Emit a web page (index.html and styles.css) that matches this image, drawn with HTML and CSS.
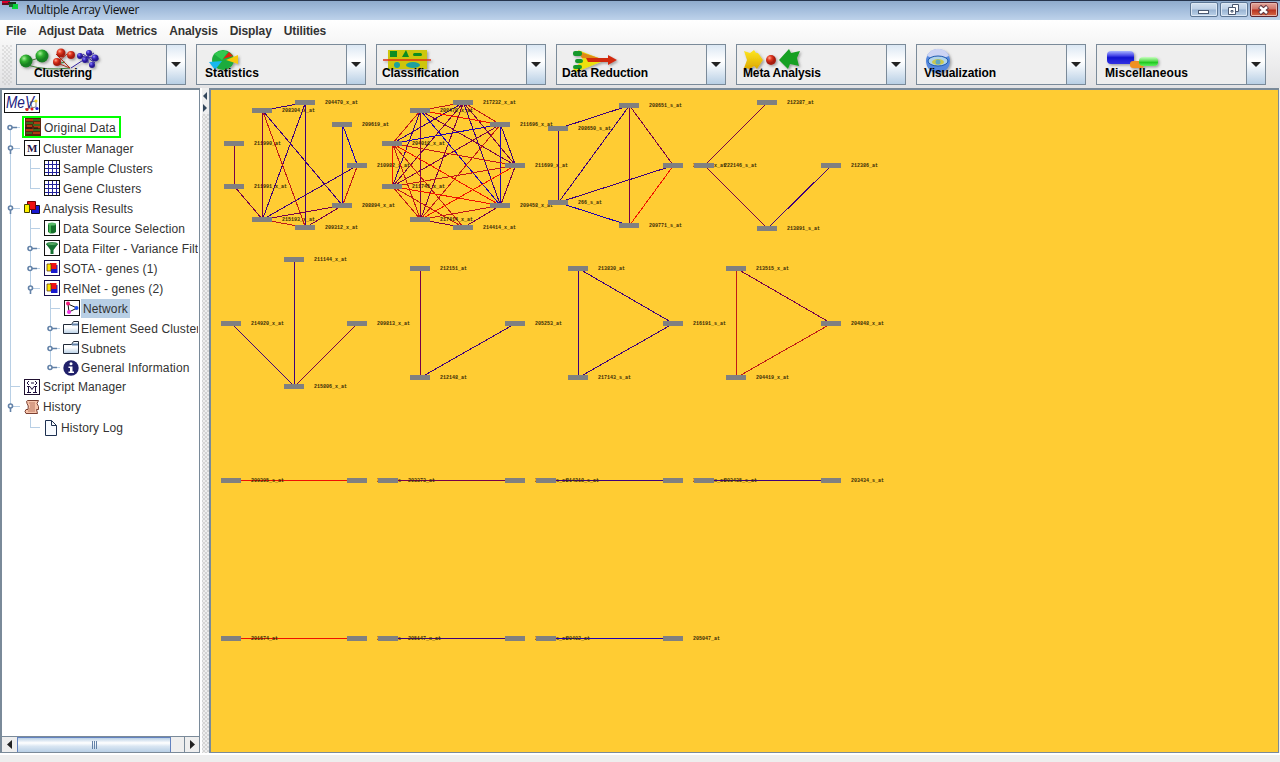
FILE: index.html
```html
<!DOCTYPE html>
<html lang="en">
<head>
<meta charset="utf-8">
<title>Multiple Array Viewer</title>
<link rel="stylesheet" href="styles.css">
</head>
<body>
<div class="window">
  <header class="titlebar">
    <svg class="appicon" width="20" height="20"><path d="M2 1h8v4H2z" fill="#d8002c"/><path d="M8 2h8v3H8z" fill="#17351c"/><path d="M2 3h7v2H2z" fill="#601020"/><path d="M12 4h6v5h-6z" fill="#08d33c"/><path d="M9 4h4v3H9z" fill="#166b2b"/></svg>
    <span class="title">Multiple Array Viewer</span>
    <div class="controls">
      <span class="ctl"><svg width="26" height="14"><rect x="7.500" y="7.500" width="10" height="3" fill="#fff" stroke="#4a5870"/></svg></span>
      <span class="ctl"><svg width="26" height="14"><path d="M11.500 1.500h6v7h-6z" fill="#fff" stroke="#4a5870"/><path d="M7.500 4.500h7v7h-7z" fill="#fff" stroke="#4a5870"/><path d="M10 7.500h2v1.500h-2z" fill="none" stroke="#4a5870"/></svg></span>
      <span class="ctl close"><svg width="26" height="14"><path d="M8.500 3.500l8 7M16.500 3.500l-8 7" stroke="#5b3440" stroke-width="4.500"/><path d="M9 4l7 6M16 4l-7 6" stroke="#fff" stroke-width="2.500"/></svg></span>
    </div>
  </header>
  <nav class="menubar"><span>File</span><span>Adjust Data</span><span>Metrics</span><span>Analysis</span><span>Display</span><span>Utilities</span></nav>
  <div class="toolbar">
    <div class="grip"></div>
    <div class="tool"><svg class="art" width="149" height="39">
      <defs>
        <radialGradient id="gg" cx=".35" cy=".3"><stop offset="0" stop-color="#a8f098"/><stop offset=".5" stop-color="#30b030"/><stop offset="1" stop-color="#188020"/></radialGradient>
        <radialGradient id="gr" cx=".35" cy=".3"><stop offset="0" stop-color="#ffa890"/><stop offset=".5" stop-color="#e03820"/><stop offset="1" stop-color="#a81c10"/></radialGradient>
        <radialGradient id="gb" cx=".35" cy=".3"><stop offset="0" stop-color="#9a90ff"/><stop offset=".5" stop-color="#4030c8"/><stop offset="1" stop-color="#281890"/></radialGradient>
        <linearGradient id="pb" x2="0" y2="1"><stop offset="0" stop-color="#a8b4ff"/><stop offset=".35" stop-color="#4848e8"/><stop offset=".5" stop-color="#1414d0"/><stop offset="1" stop-color="#3030e0"/></linearGradient>
        <linearGradient id="pg" x2="0" y2="1"><stop offset="0" stop-color="#c8ffc0"/><stop offset=".45" stop-color="#58dc50"/><stop offset=".6" stop-color="#20c820"/><stop offset="1" stop-color="#60f060"/></linearGradient>
        <linearGradient id="pa" x2="0" y2="1"><stop offset="0" stop-color="#ffe820"/><stop offset="1" stop-color="#dca800"/></linearGradient>
        <linearGradient id="bt" x2="0" y2="1"><stop offset="0" stop-color="#f4f8fc"/><stop offset=".5" stop-color="#fff"/><stop offset="1" stop-color="#b8cfe5"/></linearGradient>
        <filter id="sh" x="-20%" y="-20%" width="150%" height="160%"><feDropShadow dx="1.500" dy="1.500" stdDeviation="1" flood-color="#555" flood-opacity=".5"/></filter>
      </defs>
      <g filter="url(#sh)"><path d="M9 17L25 12M10 20q20 6 43 3L47 17 41 11M48 17l-8 2" fill="none" stroke="#3a7a30"/><path d="M39 9l14 14M50 9l-10 9M40 18l13 5" stroke="#b03018" fill="none"/><path d="M54 23l17-11M62 11l20 3M71 6v12M66 9l12 9M77 8l-10 6" stroke="#3424a0" fill="none"/>
      <circle cx="9" cy="16" r="6.500" fill="url(#gg)"/><circle cx="25" cy="11" r="6.500" fill="url(#gg)"/><g fill="url(#gr)"><circle cx="44" cy="8" r="4.500"/><circle cx="54" cy="10" r="4"/><circle cx="40" cy="17" r="4"/></g><g fill="url(#gb)"><circle cx="63" cy="11" r="3"/><circle cx="72" cy="8" r="3"/><circle cx="78" cy="13" r="3.500"/><circle cx="68" cy="15" r="3"/><circle cx="75" cy="20" r="3"/></g></g>
      <text x="17" y="32" textLength="58">Clustering</text></svg><span class="drop"></span></div>
    <div class="tool"><svg class="art" width="149" height="39">
      <g filter="url(#sh)"><ellipse cx="26" cy="15" rx="11" ry="10" fill="#1cac3c"/><path d="M17 9a11 9 0 0 1 14-2L25 15z" fill="#30c850"/><path d="M26 14L32 7 36 11z" fill="#e02010"/><path d="M29 15l12-5v9z" fill="#f8c808"/><path d="M12 17l13-1-7 9z" fill="#18b8f0"/></g>
      <text x="8" y="32" textLength="54">Statistics</text></svg><span class="drop"></span></div>
    <div class="tool"><svg class="art" width="149" height="39">
      <g filter="url(#sh)"><path d="M11 5h39v19H11z" fill="#cdc60c"/><path d="M13 6h7v6h-7z" fill="#0c8c20"/><path d="M25 12l4-7 3 7z" fill="#0c8c20"/><rect x="36" y="8" width="9" height="3" rx="1.500" fill="#0c8c20"/><circle cx="20" cy="20" r="3" fill="#1aa0a0"/><ellipse cx="36" cy="20" rx="7" ry="3" fill="#1aa0a0"/><path d="M6 15h48" stroke="#e03010" stroke-width="1.500"/></g>
      <text x="5" y="32" textLength="77">Classification</text></svg><span class="drop"></span></div>
    <div class="tool"><svg class="art" width="149" height="39">
      <g filter="url(#sh)"><path d="M21 5l23 9v3L19 27l-3-3 10-9z" fill="#ece008"/><path d="M20 6l25 8-20-1z" fill="#e08818"/><path d="M29 13h22v-3l9 5-9 5v-3H31z" fill="#d22c10"/><g fill="#16982c"><rect x="16" y="6" width="9" height="5" rx="2"/><rect x="18" y="14" width="8" height="4" rx="2"/><rect x="16" y="20" width="9" height="4" rx="2"/></g></g>
      <text x="5" y="32" textLength="86">Data Reduction</text></svg><span class="drop"></span></div>
    <div class="tool"><svg class="art" width="149" height="39">
      <g filter="url(#sh)"><path d="M7 6l6 2 4-3 2 3h2l5 7-6 9-3-3-4 3-6-1 3-8z" fill="url(#pa)"/><circle cx="34" cy="15" r="5" fill="url(#gr)"/><path d="M42 15l10-11 2 4 9-2-3 7 2 8-9-2-2 5z" fill="#16a020"/></g>
      <text x="6" y="32" textLength="78">Meta Analysis</text></svg><span class="drop"></span></div>
    <div class="tool"><svg class="art" width="149" height="39">
      <g filter="url(#sh)"><circle cx="21" cy="16" r="12" fill="#5588dd"/><path d="M10 11a12 12 0 0 1 22 0q-11 5-22 0" fill="#ccd4f4"/><ellipse cx="21" cy="16" rx="10" ry="5" fill="#b0d4e8" stroke="#1c58b0"/><ellipse cx="21" cy="17" rx="6" ry="3" fill="#c8c850"/><circle cx="21" cy="17" r="2.500" fill="#60a8c0"/></g>
      <text x="7" y="32" textLength="72">Visualization</text></svg><span class="drop"></span></div>
    <div class="tool"><svg class="art" width="149" height="39">
      <g filter="url(#sh)"><rect x="10" y="6" width="27" height="13" rx="4" fill="url(#pb)"/><rect x="33" y="16" width="14" height="7" rx="3" fill="#f09020"/><rect x="42" y="12" width="19" height="9" rx="4" fill="url(#pg)"/></g>
      <text x="8" y="32" textLength="83">Miscellaneous</text></svg><span class="drop"></span></div>
  </div>
  <main class="main">
    <aside class="side">
      <div class="tree">
        <svg class="lines" width="70" height="348">
          <g stroke="#b8cfe5" fill="none" shape-rendering="crispEdges"><path d="M8.500 38v279M8.500 37.500h9M8.500 58.500h9M8.500 118.500h9M8.500 296.500h9M8.500 316.500h9M28.500 69v29.500h9M28.500 78.500h9M28.500 129v69M28.500 138.500h9M28.500 158.500h9M28.500 178.500h9M28.500 198.500h9M48.500 209v69M48.500 218.500h9M48.500 238.500h9M48.500 258.500h9M48.500 277.500h9M28.500 327v10.500h9"/></g>
          <g stroke="#6382a8" stroke-width="1.600" fill="#fff"><path d="M10 37.500h5M30 158.500h5M30 178.500h5M50 238.500h5M50 258.500h5M50 277.500h5M8.500 59v5M8.500 119v5M28.500 199v5M8.500 317v5"/><circle cx="8" cy="37.500" r="2"/><circle cx="8.500" cy="58" r="2"/><circle cx="8.500" cy="118" r="2"/><circle cx="28" cy="158.500" r="2"/><circle cx="28" cy="178.500" r="2"/><circle cx="28.500" cy="198" r="2"/><circle cx="48" cy="238.500" r="2"/><circle cx="48" cy="258.500" r="2"/><circle cx="48" cy="277.500" r="2"/><circle cx="8.500" cy="316" r="2"/></g>
        </svg>
        <div class="logo"><svg width="36" height="20"><rect x=".5" y=".5" width="35" height="19" fill="#fff" stroke="#111"/><text class="mev" x="2" y="15" textLength="28" lengthAdjust="spacingAndGlyphs">MeV</text><path d="M21 16l11-2M28 14l-2-5 6-1v6" stroke="#445" stroke-width=".7" fill="none"/><g fill="#e02020"><circle cx="23" cy="16.500" r="1.600"/><circle cx="28" cy="16" r="1.500"/></g><circle cx="33" cy="15.500" r="1.600" fill="#2020d0"/><circle cx="32" cy="8" r="1.500" fill="#f0d020"/></svg></div>
        <div class="row l0 orig"><svg width="16" height="18"><path d="M0 0h16v18H0z" fill="#5a2410"/><path d="M1 2h7M9 5h6M2 8h5M9 9h6M1 12h7M8 15h7" stroke="#d04010" stroke-width="1.500"/><path d="M8 2h7M1 5h7M8 7h7M8 12h7M1 15h6" stroke="#308020" stroke-width="1.500"/><path d="M0 10h7M9 10h4" stroke="#111"/></svg><span>Original Data</span></div>
        <div class="row l0"><svg width="16" height="16"><rect x=".5" y=".5" width="15" height="15" fill="#fff" stroke="#111"/><text class="em" x="3" y="12">M</text></svg><span>Cluster Manager</span></div>
        <div class="row l1"><svg width="16" height="16"><g id="grid"><rect x=".5" y=".5" width="15" height="15" fill="#fff" stroke="#111"/><path d="M1 4.500h14M1 8.500h14M1 12.500h14M4.500 1v14M8.500 1v14M12.500 1v14" stroke="#23239a" shape-rendering="crispEdges"/></g></svg><span>Sample Clusters</span></div>
        <div class="row l1"><svg width="16" height="16"><use href="#grid"/></svg><span>Gene Clusters</span></div>
        <div class="row l0"><svg width="16" height="16"><path d="M7.500 5.500h8v8h-8z" fill="#1818d0" stroke="#112"/><path d="M3.500 1.500h8v8h-8z" fill="#f01010" stroke="#700"/><path d="M.5 4.500h5v8h-5z" fill="#fff000" stroke="#440"/></svg><span>Analysis Results</span></div>
        <div class="row l1"><svg width="16" height="16"><rect x=".5" y=".5" width="15" height="15" fill="#fff" stroke="#111"/><path d="M4 4v8q4 3 8 0V4z" fill="#14702a"/><path d="M5 5v8l2 .5V5z" fill="#40b050"/><ellipse cx="8" cy="4" rx="4" ry="1.500" fill="#58b868"/></svg><span>Data Source Selection</span></div>
        <div class="row l1"><svg width="16" height="16"><rect x=".5" y=".5" width="15" height="15" fill="#fff" stroke="#111"/><path d="M2 4l4.500 6v4h3v-4L14 4z" fill="#147030"/><ellipse cx="8" cy="4" rx="5.500" ry="1.300" fill="#66ba70" stroke="#147030"/></svg><span>Data Filter - Variance Filter</span></div>
        <div class="row l1"><svg width="16" height="16"><g id="res"><rect x=".5" y=".5" width="15" height="15" fill="#fff" stroke="#1a1050"/><path d="M7 5h6.500v8H7z" fill="#1818d0"/><path d="M6 3h6.500v6H6z" fill="#f01010"/><path d="M3 4h4v7H3z" fill="#ffe800" stroke="#542800" stroke-width=".7"/></g></svg><span>SOTA - genes (1)</span></div>
        <div class="row l1"><svg width="16" height="16"><use href="#res"/></svg><span>RelNet - genes (2)</span></div>
        <div class="row l2"><svg width="16" height="16"><rect x=".5" y=".5" width="15" height="15" fill="#fff" stroke="#111"/><path d="M4 4l9 4-8 4z" stroke="#111" fill="none"/><circle cx="4" cy="3.500" r="2" fill="#f01878"/><circle cx="12.500" cy="8" r="2" fill="#2050f0"/><circle cx="5" cy="12" r="2" fill="#f030e0"/></svg><span class="sel">Network</span></div>
        <div class="row l2 folder"><svg width="16" height="16"><g id="fold"><path d="M.5 13.500v-9h8l2-3h5v12z" fill="url(#bt)" stroke="#222a38"/><path d="M9 4.500h6" stroke="#6382a8" stroke-width="2"/></g></svg><span>Element Seed Clusters</span></div>
        <div class="row l2 folder"><svg width="16" height="16"><use href="#fold"/></svg><span>Subnets</span></div>
        <div class="row l2 short folder"><svg width="16" height="16"><circle cx="8" cy="8" r="7.700" fill="#20206a"/><circle cx="8" cy="3.800" r="1.500" fill="#fff"/><path d="M5.500 6.500h4v5h1.500v1.500H5.500v-1.500H7v-3.500H5.500z" fill="#fff"/></svg><span>General Information</span></div>
        <div class="row l0 short"><svg width="16" height="16"><rect x=".5" y=".5" width="15" height="15" fill="#fff" stroke="#201030"/><path d="M5 2L3 4l2 2M11 2l2 2-2 2M7 4h3M3 7.500h3l2 3 2-3h3M4.500 7v6M11.500 7v6M3 13.500h4M9 13.500h4" stroke="#201040" fill="none"/></svg><span>Script Manager</span></div>
        <div class="row l0 hist"><svg width="16" height="16"><path d="M3.500 1.500h11q-3 3 0 6v3h-2l1 4H2q-2-2 0-4h2q1-4-1-6-1-3 .5-3z" fill="#f7c4aa" stroke="#7b4032"/><path d="M5 4h6M6 6h5M6 8h5M5 10h6M4 12h7" stroke="#a86450" stroke-width=".8"/></svg><span>History</span></div>
        <div class="row l1 log"><svg width="14" height="16"><path d="M1.500.5h6l5 5v10h-11z" fill="#f8fbff" stroke="#1d3050"/><path d="M7.500.5v5h5" fill="none" stroke="#1d3050"/></svg><span>History Log</span></div>
      </div>
      <div class="hscroll"><span class="sb"><svg width="15" height="15"><path d="M10 3v9L5 7.500z" fill="#222"/></svg></span><span class="thumb"><i></i><i></i><i></i></span><span class="track"></span><span class="sb end"><svg width="15" height="15"><path d="M5 3v9l5-4.500z" fill="#222"/></svg></span></div>
    </aside>
    <div class="divider"><svg width="8" height="26"><path d="M5 4v8L1 8zM1 16v8l4-4z" fill="#33475c"/></svg></div>
    <section class="canvas"><svg id="graph" width="1067" height="661" viewBox="211 90 1067 661"></svg></section>
  </main>
  <footer class="status"></footer>
</div>
<script src="graph.js"></script>
</body>
</html>
```
FILE: styles.css
```css
* { box-sizing: border-box; }
body { margin: 0; font-family: "Liberation Sans", Arial, sans-serif; font-size: 12px; color: #333; }
svg { display: block; flex: none; }
.window { width: 1280px; height: 762px; display: flex; flex-direction: column; background: #eee; overflow: hidden; }
.titlebar { height: 20px; flex: none; display: flex; align-items: flex-start; border-top: 1px solid #26344c; background: linear-gradient(#8fabcc, #a3bddc 45%, #bdd2ea); }
.appicon { width: 20px; margin-top: -1px; }
.title { font: 12px/18px "Open Sans", sans-serif; color: #111; padding-left: 6px; letter-spacing: -.32px; }
.controls { margin-left: auto; display: flex; gap: 2px; padding: 1px 2px 0 0; }
.ctl { width: 28px; height: 15px; border: 1px solid #5d7795; border-radius: 2px; background: linear-gradient(#d4e2f1, #bccfe5 48%, #98b3d2 52%, #bdd3e9); box-shadow: inset 0 0 0 1px #dde8f4; }
.ctl.close { border-color: #5b2430; background: linear-gradient(#e4a79d, #d07467 48%, #b8301e 52%, #d46a48); box-shadow: inset 0 0 0 1px #e8b5aa; }
.menubar { height: 22px; flex: none; display: flex; gap: 12px; padding: 0 6px; font-weight: bold; line-height: 22px; letter-spacing: -.1px; background: linear-gradient(#fff, #f6f6f6); }
.toolbar { height: 46px; flex: none; display: flex; gap: 10px; padding-top: 2px; background: linear-gradient(#f6f6f6, #e2e2e4); }
.grip { width: 10px; height: 40px; margin: 1px -6px 0 2px; background: radial-gradient(circle at 1px 1px, #b4b4b4 .5px, transparent .8px) 0 0 / 4px 4px, radial-gradient(circle at 1px 1px, #b4b4b4 .5px, transparent .8px) 2px 2px / 4px 4px; }
.tool { width: 170px; height: 41px; flex: none; display: flex; border: 1px solid #7a8a99; background: #eee; }
.art { overflow: visible; }
.art text { font-weight: bold; font-size: 12px; fill: #000; }
.drop { width: 19px; border-left: 1px solid #7a8a99; background: linear-gradient(#dbe7f3, #fff 40%, #f0f5fa 55%, #b8cfe5); display: flex; align-items: center; justify-content: center; }
.drop::after { content: ""; border: 5px solid transparent; border-top: 5px solid #222; border-bottom: 0; }
.main { height: 665px; flex: none; display: flex; }
.side { width: 200px; flex: none; display: flex; flex-direction: column; background: #fff; border: 2px solid #7a8a99; border-right-width: 1px; border-bottom-width: 1px; overflow: hidden; }
.tree { position: relative; flex: 1; overflow: hidden; padding-top: 3px; margin-right: 1px; white-space: nowrap; }
.lines { position: absolute; left: 0; top: 0; }
.logo { padding-left: 2px; height: 23px; }
.mev { font: italic 16px "Liberation Sans", sans-serif; fill: #202080; }
.em { font: bold 11px "Liberation Serif", serif; fill: #201040; }
.row { position: relative; height: 20px; display: flex; align-items: center; gap: 3px; letter-spacing: .13px; }
.row > span { padding-top: 1px; }
.l0 { margin-left: 22px; }
.l1 { margin-left: 42px; }
.l2 { margin-left: 62px; gap: 1px; }
.folder svg { margin-left: -1px; margin-right: 1px; }
.orig { margin-left: 20px; width: 99px; height: 22px; border: 2px solid #00ff00; padding-left: 1px; gap: 3px; letter-spacing: .13px; }
.short { height: 19px; }
.short > span { padding-top: 0; }
.hist { height: 21px; }
.hist > span { padding-top: 0; }
.log { height: 21px; gap: 2px; }
.log > span { padding-top: 0; margin-left: 1px; }
.row > .sel { background: #b8cfe5; line-height: 18px; padding: 1px 2px 0 2px; }
.hscroll { height: 16px; flex: none; display: flex; border-top: 1px solid #7a8a99; background: #eee; }
.sb { width: 15px; }
.end { border-left: 1px solid #7a8a99; }
.thumb { width: 154px; border: 1px solid #6382bf; border-bottom: 0; background: linear-gradient(#b8cfe5, #fff 35%, #d8e5f2 60%, #b8cfe5); display: flex; gap: 1px; align-items: center; justify-content: center; }
.thumb i { width: 1px; height: 8px; background: #6382a8; }
.track { flex: 1; }
.divider { width: 9px; flex: none; background: radial-gradient(circle at 1px 1px, #999 .5px, transparent .8px) 3px 0 / 4px 4px, radial-gradient(circle at 1px 1px, #999 .5px, transparent .8px) 1px 2px / 4px 4px, #eee; border-left: 2px solid #fff; }
.divider svg { background: #eee; width: 7px; }
.canvas { width: 1070px; border: 2px solid #7a8a99; border-right-width: 1px; border-bottom-width: 1px; background: #ffcc33; }
.status { flex: 1; border-top: 2px solid #fff; background: #eee; }
#graph text { font: bold 5px "Liberation Mono", monospace; fill: #3a2a08; }
#graph line { stroke-width: 1; shape-rendering: crispEdges; }
#graph rect { fill: #808080; }
```
FILE: graph.js
```javascript
// Each component: nodes [x, y, label] and edges [from, to, colour].
const N = '#40007a', B = '#2000b0', P = '#780048', R = '#c01818', F = '#f01000';
const nets = [
  { nodes: [[305,102,'204470_x_at'],[262,110,'208304_x_at'],[342,124,'209619_at'],[234,143,'211990_at'],[357,165,'210982_x_at'],[234,186,'211991_x_at'],[342,205,'208894_x_at'],[262,219,'215193_x_at'],[305,227,'209312_x_at']],
    edges: [[0,1,N],[0,7,N],[0,8,N],[1,7,P],[1,8,R],[1,6,N],[2,6,B],[2,4,B],[3,5,P],[5,7,P],[4,7,N],[4,6,R],[6,7,P],[6,8,P],[7,8,R]] },
  { nodes: [[463,102,'217232_x_at'],[420,110,'208470_x_at'],[500,124,'211696_x_at'],[392,143,'204018_x_at'],[515,165,'211699_x_at'],[392,186,'211745_x_at'],[500,205,'209458_x_at'],[420,219,'217414_x_at'],[463,227,'214414_x_at']],
    edges: [[0,1,R],[0,2,R],[0,3,N],[0,4,P],[0,5,P],[0,6,N],[0,7,P],[1,2,F],[1,3,R],[1,4,P],[1,5,N],[1,6,B],[1,7,P],[2,3,B],[2,4,N],[2,5,P],[2,6,B],[2,7,R],[3,4,R],[3,5,F],[3,6,F],[3,7,R],[3,8,R],[4,5,R],[4,6,P],[4,7,F],[5,6,F],[5,7,R],[5,8,R],[6,7,R],[6,8,P],[7,8,P]] },
  { nodes: [[629,105,'208651_s_at'],[558,128,'208650_s_at'],[673,165,'216379_x_at'],[558,202,'266_s_at'],[629,225,'209771_s_at']],
    edges: [[0,1,N],[0,3,N],[0,4,P],[0,2,P],[1,3,N],[2,3,N],[2,4,F],[3,4,B]] },
  { nodes: [[767,102,'212387_at'],[704,165,'222146_s_at'],[831,165,'212386_at'],[767,228,'213891_s_at']],
    edges: [[0,1,P],[1,3,P],[2,3,N]] },
  { nodes: [[294,259,'211144_x_at'],[231,323,'214920_x_at'],[357,323,'209813_x_at'],[294,386,'215806_x_at']],
    edges: [[0,3,N],[1,3,N],[2,3,P]] },
  { nodes: [[420,268,'212151_at'],[515,323,'205253_at'],[420,377,'212148_at']], edges: [[0,2,P],[1,2,N]] },
  { nodes: [[578,268,'213830_at'],[673,323,'216191_s_at'],[578,377,'217143_s_at']], edges: [[0,1,N],[0,2,N],[1,2,N]] },
  { nodes: [[736,268,'213515_x_at'],[831,323,'204848_x_at'],[736,377,'204419_x_at']], edges: [[0,1,P],[0,2,R],[1,2,R]] },
  { nodes: [[231,480,'209395_s_at'],[357,480,'204420_s']], edges: [[0,1,F]] },
  { nodes: [[388,480,'203373_at'],[515,480,'203372_s_at']], edges: [[0,1,P]] },
  { nodes: [[546,480,'214218_s_at'],[673,480,'221728_x_at']], edges: [[0,1,N]] },
  { nodes: [[704,480,'203435_s_at'],[831,480,'203434_s_at']], edges: [[0,1,N]] },
  { nodes: [[231,638,'201674_at'],[357,638,'210517_s']], edges: [[0,1,F]] },
  { nodes: [[388,638,'205147_x_at'],[515,638,'207677_s_at']], edges: [[0,1,N]] },
  { nodes: [[546,638,'20402_at'],[673,638,'205047_at']], edges: [[0,1,B]] }
];

const svg = document.getElementById('graph');
function add(tag, attrs, text) {
  const el = document.createElementNS('http://www.w3.org/2000/svg', tag);
  for (const k in attrs) el.setAttribute(k, attrs[k]);
  if (text) el.textContent = text;
  svg.appendChild(el);
}
for (const net of nets) {
  for (const [a, b, c] of net.edges) {
    const [x1, y1] = net.nodes[a], [x2, y2] = net.nodes[b];
    add('line', { x1: x1 + 0.5, y1: y1 + 0.5, x2: x2 + 0.5, y2: y2 + 0.5, stroke: c });
  }
  for (const [x, y, label] of net.nodes) {
    add('text', { x: x + 20, y: y + 2 }, label);
  }
  for (const [x, y] of net.nodes) {
    add('rect', { x: x - 10, y: y - 2, width: 20, height: 5 });
  }
}
```
